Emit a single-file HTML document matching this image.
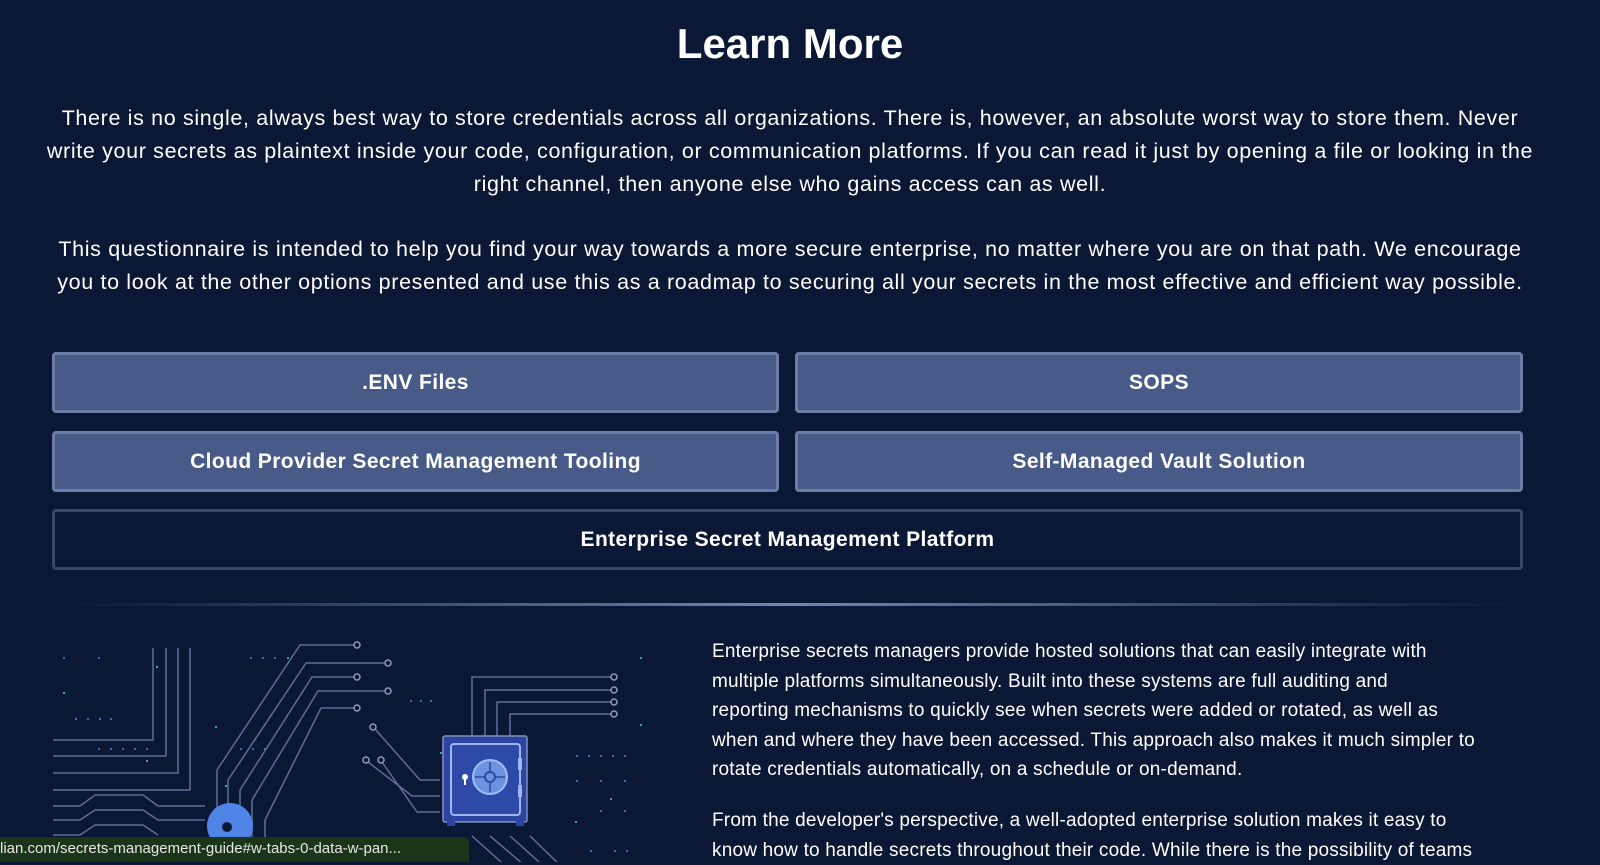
<!DOCTYPE html>
<html><head><meta charset="utf-8"><style>
*{margin:0;padding:0;box-sizing:border-box}
body{width:1600px;height:862px;overflow:hidden;background:#0a1735;color:#fff;font-family:"Liberation Sans",sans-serif;position:relative}
.c{position:absolute;left:0;width:1600px;text-align:center;white-space:nowrap}
h1{position:absolute;left:0;width:1580px;text-align:center;top:20px;font-size:42px;font-weight:bold;letter-spacing:0px}
.p{font-size:21.5px;letter-spacing:0.65px;line-height:33px}
.b{position:absolute;height:61px;border:3px solid #6a7ea8;border-radius:4px;background:#485a87;font-weight:bold;font-size:21px;letter-spacing:0.4px;display:flex;align-items:center;justify-content:center}
.o{background:#0a1735;border-color:#3a4765}
.r{position:absolute;left:712px;font-size:19px;letter-spacing:0.2px;line-height:29.6px;white-space:nowrap}
.s{position:absolute;left:0;top:837px;width:469px;height:25px;background:#1a3518;border-radius:0 5px 0 0;font-size:15px;padding:3px 0 0 0;color:#e8e8e8;white-space:nowrap;overflow:hidden}
</style></head><body>
<h1>Learn More</h1>
<div class="c p" style="top:102px;width:1580px">There is no single, always best way to store credentials across all organizations. There is, however, an absolute worst way to store them. Never<br>write your secrets as plaintext inside your code, configuration, or communication platforms. If you can read it just by opening a file or looking in the<br>right channel, then anyone else who gains access can as well.</div>
<div class="c p" style="top:233px;width:1580px">This questionnaire is intended to help you find your way towards a more secure enterprise, no matter where you are on that path. We encourage<br>you to look at the other options presented and use this as a roadmap to securing all your secrets in the most effective and efficient way possible.</div>
<div class="b" style="left:52px;top:352px;width:727px">.ENV Files</div>
<div class="b" style="left:795px;top:352px;width:728px">SOPS</div>
<div class="b" style="left:52px;top:431px;width:727px">Cloud Provider Secret Management Tooling</div>
<div class="b" style="left:795px;top:431px;width:728px">Self-Managed Vault Solution</div>
<div class="b o" style="left:52px;top:509px;width:1471px">Enterprise Secret Management Platform</div>
<div style="position:absolute;left:60px;top:603px;width:1460px;height:3px;background:linear-gradient(90deg,rgba(90,110,160,0),#6f86b8 50%,rgba(90,110,160,0))"></div>
<svg style="position:absolute;left:0;top:620px" width="680" height="242" fill="none" stroke="#8292b8" stroke-width="1.5">
<g stroke="#5d6e99">
<path d="M53 120H153V28M53 136H166V28M53 153H178V28M53 170H190V28"/>
<path d="M217 150L300 25H357M228 160L306 43H388M240 170L312 57H357M252 180L318 71H388M265 200L321 88H357"/>
<path d="M217 150V240M228 160V240M240 170V240M252 180V240M265 200V240"/>
<path d="M472 144V57H614M485 144V70H614M497 144V82H614M510 144V94H614"/>
<path d="M375 109L420 160H440M368 142L412 176H440M382 142L417 192H440"/>
<path d="M53 186H80L95 175H143L158 186H205M53 200H80L95 190H143L158 200H205M53 215H80L95 205H143L158 215"/>
<path d="M472 216L510 250M490 216L530 250M510 216L548 250M530 216L565 250"/>
</g>
<g fill="#0a1735" stroke="#8a9ac0"><circle cx="357" cy="25" r="3"/><circle cx="388" cy="43" r="3"/><circle cx="357" cy="57" r="3"/><circle cx="388" cy="71" r="3"/><circle cx="357" cy="88" r="3"/><circle cx="614" cy="57" r="3"/><circle cx="614" cy="70" r="3"/><circle cx="614" cy="82" r="3"/><circle cx="614" cy="94" r="3"/><circle cx="373" cy="107" r="3"/><circle cx="366" cy="140" r="3"/><circle cx="381" cy="140" r="3"/></g>
<g stroke="none" fill="#3d6fb5">
<path d="M63 37h2v2h-2zM98 37h2v2h-2zM250 37h2v2h-2zM262 37h2v2h-2zM274 37h2v2h-2zM410 80h2v2h-2zM420 80h2v2h-2zM430 80h2v2h-2zM75 98h2v2h-2zM87 98h2v2h-2zM99 98h2v2h-2zM110 98h2v2h-2zM98 128h2v2h-2zM110 128h2v2h-2zM122 128h2v2h-2zM134 128h2v2h-2zM146 128h2v2h-2zM240 128h2v2h-2zM252 128h2v2h-2zM264 128h2v2h-2zM576 135h2v2h-2zM588 135h2v2h-2zM600 135h2v2h-2zM612 135h2v2h-2zM624 135h2v2h-2zM576 160h2v2h-2zM600 160h2v2h-2zM624 160h2v2h-2zM600 190h2v2h-2zM624 190h2v2h-2zM590 230h2v2h-2zM614 230h2v2h-2zM626 230h2v2h-2z"/>
</g>
<g stroke="none" fill="#2fae9b"><path d="M63 72h2v2h-2zM156 46h2v2h-2zM287 37h2v2h-2zM215 106h2v2h-2zM225 165h2v2h-2zM146 140h2v2h-2zM640 37h2v2h-2zM640 104h2v2h-2zM610 178h2v2h-2zM575 201h2v2h-2zM440 132h2v2h-2z"/></g>
<rect x="443" y="116" width="84" height="86" rx="2" fill="#2c45a3"/>
<rect x="451" y="124" width="69" height="71" rx="3" fill="#2e4aa8" stroke="#9fb6f0" stroke-width="2"/>
<circle cx="490" cy="157" r="17" fill="#6d93e0" stroke="#9ebbf5" stroke-width="2"/>
<circle cx="490" cy="157" r="5" stroke="#2e4aa8" stroke-width="2"/>
<path d="M490 142v10M490 162v10M475 157h10M495 157h10" stroke="#2e4aa8" stroke-width="1.5"/>
<circle cx="465" cy="157" r="3" fill="#fff" stroke="none"/><path d="M465 158v7" stroke="#fff" stroke-width="2"/>
<rect x="518" y="138" width="4" height="12" fill="#9fb6f0" stroke="none"/><rect x="518" y="165" width="4" height="12" fill="#9fb6f0" stroke="none"/>
<rect x="447" y="198" width="8" height="8" fill="#2c45a3" stroke="none"/><rect x="516" y="198" width="8" height="8" fill="#2c45a3" stroke="none"/>
<circle cx="230" cy="206" r="23" fill="#4f84e6" stroke="none"/>
<circle cx="227" cy="207" r="5" fill="#0a1735" stroke="none"/>
</svg>
<div class="r" style="top:637px">Enterprise secrets managers provide hosted solutions that can easily integrate with<br>multiple platforms simultaneously. Built into these systems are full auditing and<br>reporting mechanisms to quickly see when secrets were added or rotated, as well as<br>when and where they have been accessed. This approach also makes it much simpler to<br>rotate credentials automatically, on a schedule or on-demand.</div>
<div class="r" style="top:806px">From the developer's perspective, a well-adopted enterprise solution makes it easy to<br>know how to handle secrets throughout their code. While there is the possibility of teams</div>
<div class="s">lian.com/secrets-management-guide#w-tabs-0-data-w-pan...</div>
</body></html>
